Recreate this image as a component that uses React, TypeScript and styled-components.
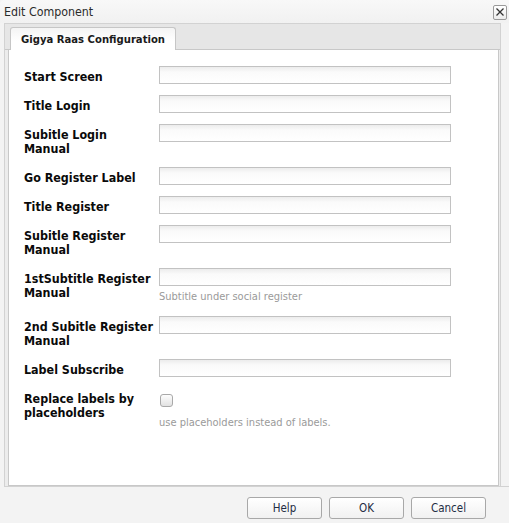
import React from "react";
import styled, { createGlobalStyle } from "styled-components";

const GlobalStyle = createGlobalStyle`
  html, body {
    margin: 0;
    padding: 0;
    background: #f3f3f3;
  }
  body {
    font-family: "DejaVu Sans Condensed", "DejaVu Sans", Tahoma, sans-serif;
  }
  * { box-sizing: border-box; }
`;

const Window = styled.div`
  width: 509px;
  height: 523px;
  display: flex;
  flex-direction: column;
  background: #f3f3f3;
  border-top-left-radius: 4px;
  overflow: hidden;
`;

const TitleBar = styled.div`
  height: 23px;
  flex: none;
  display: flex;
  align-items: center;
  justify-content: space-between;
  padding: 0 2px 0 4px;
  background: linear-gradient(#f8f8f8, #f1f1f1);
`;

const Title = styled.span`
  font-size: 12.3px;
  color: #2b2b2b;
`;

const CloseButton = styled.button`
  width: 14px;
  height: 15px;
  padding: 0;
  margin-top: 1px;
  border: 1px solid #9a9a9a;
  border-radius: 2px;
  background: linear-gradient(#ffffff, #ececec);
  display: flex;
  align-items: center;
  justify-content: center;
`;

const Frame = styled.div`
  flex: 1;
  margin: 0 8px 0 4px;
  display: flex;
  flex-direction: column;
  background: #ececec;
  border: 1px solid #d2d2d2;
  border-bottom: none;
`;

const TabStrip = styled.div`
  height: 26px;
  flex: none;
  display: flex;
  align-items: flex-end;
  padding-left: 5px;
  background: #e6e6e6;
  border-bottom: 1px solid #c8c8c8;
  position: relative;
  z-index: 1;
`;

const Tab = styled.div`
  height: 23px;
  margin-bottom: -1px;
  padding: 0 10px;
  display: flex;
  align-items: center;
  border: 1px solid #c6c6c6;
  border-bottom: none;
  border-radius: 3px 3px 0 0;
  background: linear-gradient(#f4f4f4, #ffffff 60%);
  font-size: 11.2px;
  font-weight: bold;
  color: #1a1a1a;
`;

const Body = styled.div`
  flex: 1;
  margin: 0 1px 0 3px;
  background: #fff;
  border: 1px solid #c8c8c8;
  border-top: none;
  padding: 16px 0 0 15px;
`;

const Row = styled.div`
  display: flex;
  margin-bottom: 11px;
`;

const Label = styled.label`
  width: 135px;
  flex: none;
  padding: 4px 4px 0 0;
  font-size: 12.4px;
  line-height: 14px;
  font-weight: bold;
  color: #0a0a0a;
`;

const Field = styled.div`
  width: 292px;
  display: flex;
  flex-direction: column;
`;

const TextInput = styled.input`
  width: 292px;
  height: 18px;
  margin: 0;
  padding: 0 3px;
  border: 1px solid #c2c2c2;
  background: linear-gradient(#ececec, #fafafa 5px, #ffffff);
  outline: none;
`;

const Help = styled.div`
  padding-top: 3px;
  font-size: 11px;
  line-height: 16px;
  color: #9a9a9a;
`;

const CheckWrap = styled.div`
  height: 24px;
  padding: 6px 0 0 1px;
`;

const Check = styled.span`
  display: block;
  width: 13px;
  height: 13px;
  border: 1px solid #a9a9a9;
  border-radius: 3px;
  background: linear-gradient(#fdfdfd, #e2e2e2);
`;

const Footer = styled.div`
  height: 37px;
  flex: none;
  display: flex;
  justify-content: flex-end;
  gap: 7px;
  padding: 10px 23px 0 0;
  border-top: 1px solid #d2d2d2;
  margin-left: 4px;
`;

const Button = styled.button`
  width: 75px;
  height: 22px;
  padding: 0;
  border: 1px solid #a8a8a8;
  border-radius: 3px;
  background: linear-gradient(#ffffff, #f1f1f1);
  font-family: inherit;
  font-size: 11.5px;
  color: #1f2d44;
`;

type Item = { label: string; help?: string; check?: boolean };

const items: Item[] = [
  { label: "Start Screen" },
  { label: "Title Login" },
  { label: "Subitle Login Manual" },
  { label: "Go Register Label" },
  { label: "Title Register" },
  { label: "Subitle Register Manual" },
  { label: "1stSubtitle Register Manual", help: "Subtitle under social register" },
  { label: "2nd Subitle Register Manual" },
  { label: "Label Subscribe" },
  { label: "Replace labels by placeholders", check: true, help: "use placeholders instead of labels." },
];

export default function App() {
  return (
    <>
      <GlobalStyle />
      <Window>
        <TitleBar>
          <Title>Edit Component</Title>
          <CloseButton aria-label="Close">
            <svg width="10" height="10" viewBox="0 0 10 10">
              <path d="M1.5 1.5 L8.5 8.5 M8.5 1.5 L1.5 8.5" stroke="#333" strokeWidth="1.3" />
            </svg>
          </CloseButton>
        </TitleBar>
        <Frame>
          <TabStrip>
            <Tab>Gigya Raas Configuration</Tab>
          </TabStrip>
          <Body>
            {items.map((it) => (
              <Row key={it.label}>
                <Label>{it.label}</Label>
                <Field>
                  {it.check ? (
                    <CheckWrap>
                      <Check />
                    </CheckWrap>
                  ) : (
                    <TextInput type="text" />
                  )}
                  {it.help && <Help>{it.help}</Help>}
                </Field>
              </Row>
            ))}
          </Body>
        </Frame>
        <Footer>
          <Button>Help</Button>
          <Button>OK</Button>
          <Button>Cancel</Button>
        </Footer>
      </Window>
    </>
  );
}
